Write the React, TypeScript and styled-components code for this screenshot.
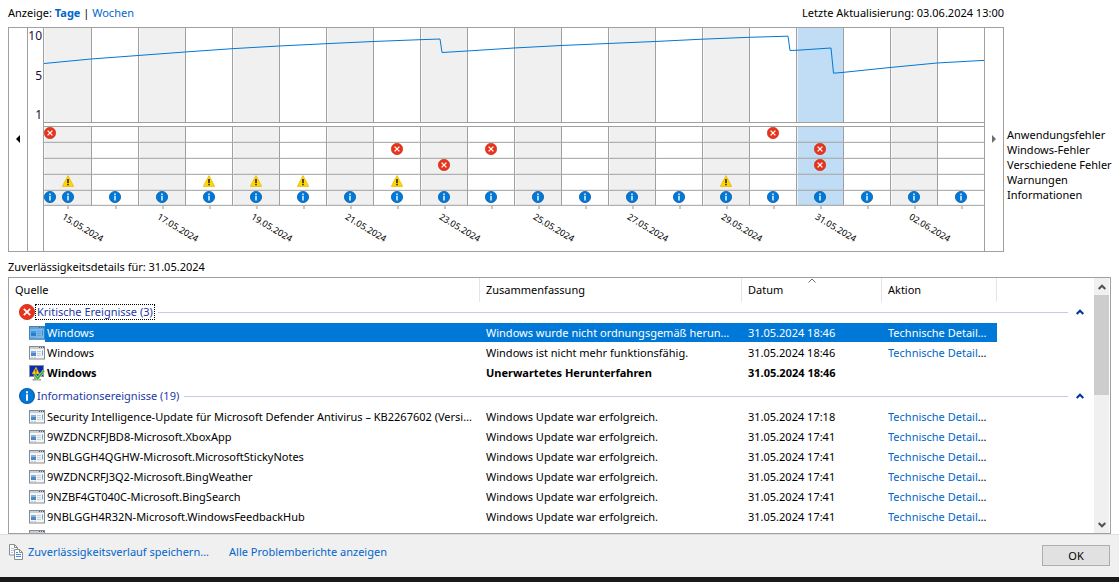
import React from "react";
import styled, { createGlobalStyle, css } from "styled-components";

const line = "#a0a0a0";
const accent = "#0078d7";
const link = "#0066cc";
const groupBlue = "#1c3aa5";

const Global = createGlobalStyle`
  *, *::before, *::after { box-sizing: border-box; }
  html, body { margin: 0; background: #fff; }
  body, button { font-family: "Noto Sans", "Open Sans", sans-serif; font-size: 11px; line-height: 16px; color: #000; }
  button { padding: 0; border: 0; background: none; }
  a { color: ${link}; text-decoration: none; }
  svg { display: block; flex: none; }
`;

const Page = styled.div`
  display: flex;
  flex-direction: column;
  height: 100vh;
  min-height: 480px;
`;

const TopBar = styled.header`
  display: flex;
  justify-content: space-between;
  padding: 5px 115px 6px 8px;
`;

const ChartArea = styled.section`
  display: grid;
  grid-template-columns: 1fr 115px;
  padding-left: 8px;
`;

const Chart = styled.div`
  display: grid;
  grid-template-columns: 19px 15px 1fr 19px;
  border: 1px solid ${line};
  border-right-width: 0;
`;

const ScrollStrip = styled.button`
  display: flex;
  align-items: center;
  justify-content: center;
  padding: 0 1px 2px 0;
  border-right: 1px solid ${line};
`;

const Axis = styled.div`
  display: flex;
  flex-direction: column;
  justify-content: space-between;
  align-items: flex-end;
  height: 95px;
  padding-right: 1px;
  color: #1b0f3a;
  font-size: 12px;
`;

const Plot = styled.div`
  position: relative;
  display: grid;
  grid-template-columns: 48px repeat(19, 1fr);
  height: 223px;
  border-left: 1px solid ${line};
  &::after {
    content: "";
    position: absolute;
    top: 0;
    right: 0;
    bottom: 0;
    border-right: 1px solid ${line};
  }
`;

const Trend = styled.svg`
  position: absolute;
  top: 0;
  left: 0;
  width: 100%;
  height: 94px;
  pointer-events: none;
`;

const Day = styled.button<{ $tone: string }>`
  display: grid;
  grid-template-rows: 95px 3px 80px 1fr;
  min-width: 0;
  --tone: ${(p) => p.$tone};
`;

const IndexCell = styled.span`
  grid-row: 1;
  background: var(--tone);
  border-right: 1px solid ${line};
  border-bottom: 1px solid ${line};
  box-shadow: inset 1px 0 rgba(255, 255, 255, 0.6);
`;

const Events = styled.span`
  grid-row: 3;
  display: grid;
  grid-template-rows: repeat(4, 16px) 15px;
  border-top: 1px solid ${line};
`;

const EventCell = styled.span`
  position: relative;
  display: flex;
  align-items: flex-start;
  justify-content: center;
  background: var(--tone);
  border-right: 1px solid ${line};
  border-bottom: 1px solid #b0b0b0;
  box-shadow: inset 1px 0 rgba(255, 255, 255, 0.6), inset 0 -1px rgba(0, 0, 0, 0.06);
`;

const EarlyMark = styled.span`
  position: absolute;
  left: 0;
`;

const DateCell = styled.span`
  grid-row: 4;
  position: relative;
  display: flex;
  flex-direction: column;
  align-items: center;
  &::before {
    content: "";
    width: 2px;
    height: 3px;
    background: #c8c8c8;
  }
`;

const DateLabel = styled.span`
  position: absolute;
  top: 4px;
  left: 19px;
  font-size: 9px;
  line-height: 12px;
  white-space: nowrap;
  transform: rotate(31deg);
  transform-origin: 0 50%;
`;

const Legend = styled.ul`
  margin: 0;
  padding: 100px 0 0 3px;
  list-style: none;
  line-height: 15px;
  white-space: nowrap;
`;

const DetailsTitle = styled.h1`
  margin: 0;
  padding: 7px 8px 2px;
  font-size: 11px;
  font-weight: 400;
`;

const Panel = styled.section`
  display: flex;
  flex: 1 1 0;
  min-height: 0;
  margin: 0 8px;
  border: 1px solid ${line};
`;

const Viewport = styled.div`
  flex: 1;
  min-width: 0;
  overflow: hidden;
`;

const Table = styled.table`
  width: 100%;
  table-layout: fixed;
  border-collapse: separate;
  border-spacing: 0;
`;

const Col = styled.col<{ $w?: number }>`
  ${(p) => p.$w && css`width: ${p.$w}px;`}
`;

const HeadCell = styled.th`
  position: relative;
  height: 24px;
  padding: 0 6px;
  border-right: 1px solid #e5e5e5;
  font-weight: 400;
  text-align: left;
  &:last-child { border-right: 0; }
`;

const SortMark = styled.svg`
  position: absolute;
  top: 0;
  left: 50%;
  margin-left: -4px;
`;

const GroupCell = styled.th<{ $spaced?: boolean }>`
  padding: ${(p) => (p.$spaced ? "3px" : "0")} 0 1px 10px;
  font-weight: 400;
`;

const GroupHead = styled.div`
  display: flex;
  align-items: center;
  height: 20px;
  padding-right: 10px;
`;

const GroupName = styled.span<{ $focus?: boolean }>`
  padding: 0 1px;
  line-height: 14px;
  border: 1px ${(p) => (p.$focus ? "dotted #000" : "solid transparent")};
  color: ${groupBlue};
`;

const GroupRule = styled.span`
  flex: 1;
  height: 1px;
  margin: 0 8px 0 3px;
  background: #c3cbe6;
`;

const Row = styled.tr<{ $bold?: boolean; $selected?: boolean }>`
  height: 20px;
  font-weight: ${(p) => (p.$bold ? 700 : 400)};
  ${(p) =>
    p.$selected &&
    css`
      color: #fff;
      a { color: #fff; }
    `}
`;

const Text = styled.div<{ $selected?: boolean; $lead?: boolean }>`
  flex: 1;
  min-width: 0;
  height: 19px;
  margin-bottom: 1px;
  padding: 0 ${(p) => (p.$lead ? "2px 0 2px" : "9px 0 6px")};
  line-height: 19px;
  overflow: hidden;
  white-space: nowrap;
  text-overflow: ellipsis;
  background: ${(p) => (p.$selected ? accent : "transparent")};
`;

const Cell = styled.td`
  padding: 0;
`;

const Source = styled.div`
  display: flex;
  align-items: center;
  padding-left: 20px;
`;

const ScrollBar = styled.div`
  display: flex;
  flex-direction: column;
  width: 16px;
  background: #f0f0f0;
  border-right: 1px solid #fff;
`;

const ScrollButton = styled.button`
  display: flex;
  align-items: center;
  justify-content: center;
  height: 17px;
`;

const Thumb = styled.div`
  height: 100px;
  margin-bottom: auto;
  background: #cdcdcd;
`;

const Footer = styled.footer`
  display: flex;
  align-items: flex-start;
  gap: 20px;
  height: 43px;
  padding: 9px 9px 0 8px;
  background: #f0f0f0;
  border-top: 1px solid #dfdfdf;
`;

const FooterLink = styled.a`
  display: flex;
  align-items: center;
  gap: 4px;
`;

const OkButton = styled.button`
  width: 68px;
  height: 21px;
  margin: 1px 0 0 auto;
  border: 1px solid #adadad;
  background: #e1e1e1;
`;

const Desktop = styled.div`
  height: 5px;
  background: #1a1a1a;
`;

const ErrorIcon = ({ size = 12 }: { size?: number }) => (
  <svg width={size} height={size} viewBox="0 0 12 12">
    <circle cx="6" cy="6" r="5.7" fill="#e8341c" stroke="#c22a14" strokeWidth=".6" />
    <path d="M3.6 3.6l4.800 4.800M8.400 3.600L3.600 8.400" stroke="#fff" strokeWidth="1.3" />
  </svg>
);

const InfoIcon = ({ size = 12 }: { size?: number }) => (
  <svg width={size} height={size} viewBox="0 0 12 12">
    <circle cx="6" cy="6" r="5.6" fill="#0078d7" stroke="#0a5ea8" strokeWidth=".8" />
    <path d="M6 2.5v1.400M6 4.700v4.800" stroke="#fff" strokeWidth="1.4" />
  </svg>
);

const WarningIcon = () => (
  <svg width="12" height="12" viewBox="0 0 12 12">
    <path d="M6 .6L11.7 11.4H.3z" fill="#ffd800" stroke="#eab000" strokeWidth=".7" strokeLinejoin="round" />
    <path d="M6 4v4M6 8.8v1.4" stroke="#111" strokeWidth="1.4" />
  </svg>
);

const AppIcon = ({ selected }: { selected?: boolean }) => (
  <svg width="16" height="14" viewBox="0 0 16 14">
    <rect x=".5" y=".5" width="15" height="12.5" fill="#f4f5f6" stroke="#868b92" />
    <path d="M1 2h14" stroke="#c9ced4" strokeWidth="2" />
    <path d="M10 1.5h1M12 1.5h1M14 1.5h1" stroke="#555c66" />
    <rect x="2" y="5" width="5" height="2" fill="#86b4e0" />
    <rect x="2" y="7" width="5" height="3" fill="#4d89c4" />
    <path d="M8 5.500h4M8 7.500h4M8 9.500h4" stroke="#c9cdd2" />
    <path d="M13.500 4.500v5" stroke="#6aa5dc" />
    <path d="M2 11.500h2M5 11.500h2" stroke="#c9cdd2" />
    {selected && <rect width="16" height="14" fill={accent} opacity=".5" />}
  </svg>
);

const MonitorIcon = () => (
  <svg width="16" height="16" viewBox="0 0 16 16">
    <rect x=".5" y=".5" width="14" height="11" fill="#0a2bb8" stroke="#8a8f98" />
    <path d="M5 12h5v2h2v1.500H3.500V14H5z" fill="#9aa0a8" />
    <path d="M7 2l3.500 7H3z" fill="#ffd21a" stroke="#d89c00" strokeWidth=".5" />
    <path d="M6.900 4.300v2.500M6.900 7.400v1" stroke="#222" strokeWidth="1" />
    <path d="M5.500 9.500l3.200 4L15 5.500" fill="none" stroke="#d9f5d2" strokeWidth="2.800" />
    <path d="M5.500 9.500l3.200 4L15 5.500" fill="none" stroke="#3fae2a" strokeWidth="2" />
  </svg>
);

const CopyIcon = () => (
  <svg width="16" height="16" viewBox="0 0 16 16">
    <path d="M1.500.5h5l3 3v7.500h-8z" fill="#fff" stroke="#8c8c8c" />
    <path d="M6.500.5v3h3" fill="none" stroke="#8c8c8c" />
    <path d="M3 4.500h3M3 6.500h3M3 8.500h2" stroke="#a9c5e8" />
    <path d="M6.500 5.500h5l3 3v7h-8z" fill="#fff" stroke="#8c8c8c" />
    <path d="M11.500 5.500v3h3" fill="none" stroke="#8c8c8c" />
    <path d="M8 8.500h2M8 10.500h5M8 12.500h5" stroke="#3d8ee0" />
  </svg>
);

const Chevron = ({ down, color = "#505050" }: { down?: boolean; color?: string }) => (
  <svg width="8" height="6" viewBox="0 0 8 6">
    <path d={down ? "M.7 1L4 4.300 7.300 1" : "M.7 5L4 1.700 7.300 5"} fill="none" stroke={color} strokeWidth="2" />
  </svg>
);

type Kind = "app" | "windows" | "misc" | "warning" | "info";
const kinds: Kind[] = ["app", "windows", "misc", "warning", "info"];

const marks: Record<Kind, number[]> = {
  app: [15],
  windows: [7, 9, 16],
  misc: [8, 16],
  warning: [0, 3, 4, 5, 7, 14],
  info: Array.from({ length: 20 }, (_, i) => i),
};

const selectedDay = 16;
const dates = ["15.05.2024", "17.05.2024", "19.05.2024", "21.05.2024", "23.05.2024", "25.05.2024", "27.05.2024", "29.05.2024", "31.05.2024", "02.06.2024"];
const days = Array.from({ length: 20 }, (_, i) => ({
  date: i % 2 ? undefined : dates[i / 2],
  tone: i === selectedDay ? "#c0ddf5" : i % 2 ? "#fff" : "#f0f0f0",
}));

const trend =
  "0,35.500 47,31 94,27.500 141,24 188,20.700 235,18 282,15.700 329,13.500 376,11.700 396,11 398,24.500 423,23 470,20 517,17.500 564,15.500 611,13.500 658,11.200 705,9.300 744,8.200 746,22.500 752,22.300 787,20 789.500,45.200 799,44.400 846,39.500 893,35 941,32.300";

interface Entry {
  source: string;
  summary: string;
  date: string;
  action?: boolean;
  bold?: boolean;
  selected?: boolean;
}

const update = (source: string, time = "17:41"): Entry => ({
  source,
  summary: "Windows Update war erfolgreich.",
  date: `31.05.2024 ${time}`,
  action: true,
});

const critical: Entry[] = [
  { source: "Windows", summary: "Windows wurde nicht ordnungsgemäß heruntergefahren.", date: "31.05.2024 18:46", action: true, selected: true },
  { source: "Windows", summary: "Windows ist nicht mehr funktionsfähig.", date: "31.05.2024 18:46", action: true },
  { source: "Windows", summary: "Unerwartetes Herunterfahren", date: "31.05.2024 18:46", bold: true },
];

const information: Entry[] = [
  update("Security Intelligence-Update für Microsoft Defender Antivirus – KB2267602 (Version 1.411.410.0)", "17:18"),
  update("9WZDNCRFJBD8-Microsoft.XboxApp"),
  update("9NBLGGH4QGHW-Microsoft.MicrosoftStickyNotes"),
  update("9WZDNCRFJ3Q2-Microsoft.BingWeather"),
  update("9NZBF4GT040C-Microsoft.BingSearch"),
  update("9NBLGGH4R32N-Microsoft.WindowsFeedbackHub"),
  update("9PLFNLNT3G5G-AppUp.IntelGraphicsExperience"),
];

const markIcon = (kind: Kind) =>
  kind === "info" ? <InfoIcon /> : kind === "warning" ? <WarningIcon /> : <ErrorIcon />;

function Group({ icon, name, rows, focus, spaced }: { icon: React.ReactNode; name: string; rows: Entry[]; focus?: boolean; spaced?: boolean }) {
  return (
    <tbody>
      <tr>
        <GroupCell colSpan={5} scope="rowgroup" $spaced={spaced}>
          <GroupHead>
            {icon}
            <GroupName $focus={focus}>{name}</GroupName>
            <GroupRule />
            <button aria-label={`${name} reduzieren`}>
              <Chevron color="#003399" />
            </button>
          </GroupHead>
        </GroupCell>
      </tr>
      {rows.map((r, i) => (
        <Row key={i} $bold={r.bold} $selected={r.selected}>
          <Cell>
            <Source>
              {r.bold ? <MonitorIcon /> : <AppIcon selected={r.selected} />}
              <Text $lead $selected={r.selected}>{r.source}</Text>
            </Source>
          </Cell>
          <Cell><Text $selected={r.selected}>{r.summary}</Text></Cell>
          <Cell><Text $selected={r.selected}>{r.date}</Text></Cell>
          <Cell>
            <Text $selected={r.selected}>{r.action && <a href="#details">Technische Details anzeigen</a>}</Text>
          </Cell>
          <td />
        </Row>
      ))}
    </tbody>
  );
}

export default function App() {
  return (
    <Page>
      <Global />
      <TopBar>
        <nav>
          Anzeige: <a href="#tage"><b>Tage</b></a> | <a href="#wochen">Wochen</a>
        </nav>
        <span>Letzte Aktualisierung: 03.06.2024 13:00</span>
      </TopBar>

      <ChartArea>
        <Chart>
          <ScrollStrip aria-label="Zurück">
            <svg width="4" height="8" viewBox="0 0 4 8"><path d="M4 0v8L0 4z" fill="#000" /></svg>
          </ScrollStrip>
          <Axis><span>10</span><span>5</span><span>1</span></Axis>
          <Plot>
            {days.map((day, i) => (
              <Day key={i} $tone={day.tone}>
                <IndexCell />
                <Events>
                  {kinds.map((kind) => (
                    <EventCell key={kind}>
                      {i === 0 && (kind === "app" || kind === "info") && <EarlyMark>{markIcon(kind)}</EarlyMark>}
                      {marks[kind].includes(i) && markIcon(kind)}
                    </EventCell>
                  ))}
                </Events>
                <DateCell>{day.date && <DateLabel>{day.date}</DateLabel>}</DateCell>
              </Day>
            ))}
            <Trend viewBox="0 0 941 94" preserveAspectRatio="none">
              <polyline points={trend} fill="none" stroke={accent} strokeWidth="1" vectorEffect="non-scaling-stroke" />
            </Trend>
          </Plot>
          <ScrollStrip aria-label="Weiter">
            <svg width="4" height="8" viewBox="0 0 4 8"><path d="M0 0v8l4-4z" fill="#6d6d6d" /></svg>
          </ScrollStrip>
        </Chart>
        <Legend>
          <li>Anwendungsfehler</li>
          <li>Windows-Fehler</li>
          <li>Verschiedene Fehler</li>
          <li>Warnungen</li>
          <li>Informationen</li>
        </Legend>
      </ChartArea>

      <DetailsTitle>Zuverlässigkeitsdetails für: 31.05.2024</DetailsTitle>

      <Panel>
        <Viewport>
          <Table>
            <colgroup>
              <Col /><Col $w={262} /><Col $w={140} /><Col $w={115} /><Col $w={97} />
            </colgroup>
            <thead>
              <tr>
                <HeadCell>Quelle</HeadCell>
                <HeadCell>Zusammenfassung</HeadCell>
                <HeadCell>
                  Datum
                  <SortMark width="8" height="5" viewBox="0 0 8 5">
                    <path d="M.5 4.500L4 1l3.500 3.500" fill="none" stroke="#6a6a6a" />
                  </SortMark>
                </HeadCell>
                <HeadCell>Aktion</HeadCell>
                <HeadCell />
              </tr>
            </thead>
            <Group icon={<ErrorIcon size={16} />} name="Kritische Ereignisse (3)" rows={critical} focus />
            <Group icon={<InfoIcon size={16} />} name="Informationsereignisse (19)" rows={information} spaced />
          </Table>
        </Viewport>
        <ScrollBar>
          <ScrollButton aria-label="Nach oben"><Chevron /></ScrollButton>
          <Thumb />
          <ScrollButton aria-label="Nach unten"><Chevron down /></ScrollButton>
        </ScrollBar>
      </Panel>

      <Footer>
        <FooterLink href="#speichern"><CopyIcon />Zuverlässigkeitsverlauf speichern...</FooterLink>
        <FooterLink href="#berichte">Alle Problemberichte anzeigen</FooterLink>
        <OkButton>OK</OkButton>
      </Footer>
      <Desktop />
    </Page>
  );
}
